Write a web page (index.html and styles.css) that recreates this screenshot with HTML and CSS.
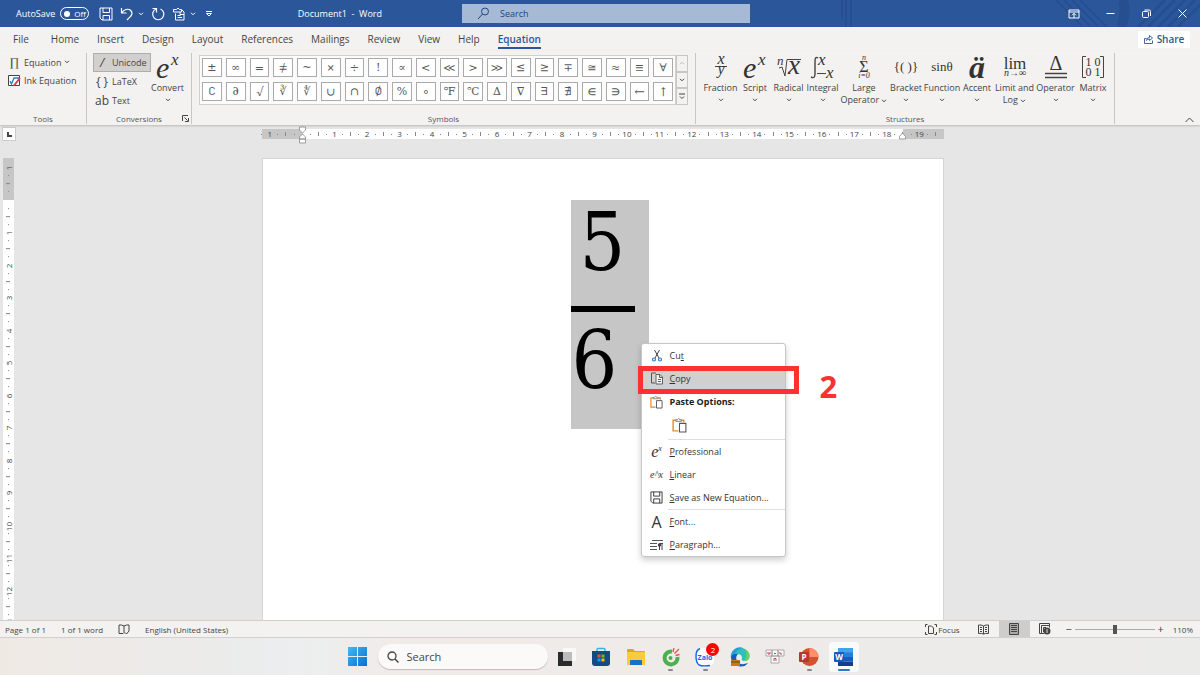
FILE: index.html
```html
<!DOCTYPE html>
<html lang="en">
<head>
    <meta charset="UTF-8">
    <meta name="viewport" content="width=device-width, initial-scale=1.0">
    <title>Document1 - Word</title>
    <link rel="stylesheet" href="styles.css">
</head>
<body>

    <!-- Shared icons -->
    <svg class="sprite" aria-hidden="true">
        <symbol id="chevron" viewBox="0 0 6 4"><path d="M1 .8 3 2.8 5 .8" fill="none" stroke="currentColor"/></symbol>
        <symbol id="floppy" viewBox="0 0 14 14"><path d="M1 1h12v12H3l-2-2zM4 1v4.500h6.500V1M4 13V8.500h6.500V13" fill="none" stroke="currentColor"/></symbol>
        <symbol id="clipboard" viewBox="0 0 14 15">
            <path d="M6 13H1V3h2.500M9.500 3H11v2" fill="none" stroke="#e08c2c" stroke-width="1.300"/>
            <path d="M3.500 4V2.500h1.500Q6 .2 7.500 2.500h1.500V4z" fill="#fff" stroke="#777" stroke-width=".9"/>
            <path d="M7 6h6v8H7z" fill="#fff" stroke="#555"/>
        </symbol>
    </svg>

    <!-- Title bar -->
    <header class="titlebar">
        <svg class="titlebar-art" viewBox="0 0 360 27" aria-hidden="true">
            <g fill="none" stroke="#1f4482" opacity=".4">
                <path d="M2 0v20M6 0v27M11 0v27" stroke-width="2"/>
                <path d="M216 0l27 27M224 0l27 27M232 0l27 27M240 0l27 27" stroke-width="2"/>
                <path d="M283 0q4 14-2 27" stroke-width="10"/>
                <path d="M298 27l27-27M308 27l27-27M318 27l27-27M328 27l27-27M338 27l27-27" stroke-width="3"/>
            </g>
        </svg>
        <div class="quick-access">
            <label class="autosave">AutoSave
                <span class="switch"><input type="checkbox"><span>Off</span></span>
            </label>
            <button class="qa-btn" aria-label="Save"><svg width="14" height="14"><use href="#floppy"/></svg></button>
            <button class="qa-btn" aria-label="Undo"><svg width="14" height="14" viewBox="0 0 14 14"><path d="M1.500 1v5h5M1.800 5.800C4 2.500 8 1.200 10.500 3.300c2.400 2.200 1.600 4.700-.2 6.400L7 13" fill="none" stroke="currentColor" stroke-width="1.200"/></svg></button>
            <button class="qa-drop" aria-label="Undo list"><svg width="6" height="4"><use href="#chevron"/></svg></button>
            <button class="qa-btn" aria-label="Repeat"><svg width="14" height="14" viewBox="0 0 14 14"><path d="M1.500 1.500h4v4M5 2A5.600 5.600 0 1 0 9.500 2" fill="none" stroke="currentColor" stroke-width="1.200"/></svg></button>
            <button class="qa-btn" aria-label="Paste"><svg width="14" height="14" viewBox="0 0 14 14"><path d="M3.500 6.500V13H12V5L10 3M1.500 5V2.500h3L6 1l1.500 1.500h2V5M1.500 5h8M8 5v2.500h4M5.500 8.500h3M5.500 10.500h4.500" fill="none" stroke="currentColor"/></svg></button>
            <button class="qa-drop" aria-label="Paste list"><svg width="6" height="4"><use href="#chevron"/></svg></button>
            <button class="qa-drop qa-custom" aria-label="Customize toolbar"><svg width="8" height="6" viewBox="0 0 8 6"><path d="M1 .5h6M1.500 2.500h5L4 5z" fill="none" stroke="currentColor"/></svg></button>
            <span class="doc-title">Document1&nbsp; -&nbsp; Word</span>
        </div>
        <label class="search-box">
            <svg width="13" height="13" viewBox="0 0 13 13"><circle cx="8" cy="4.500" r="3.500" fill="none" stroke="currentColor"/><path d="M5.500 7 1 12" stroke="currentColor"/></svg>
            <input type="text" placeholder="Search" aria-label="Search">
        </label>
        <div class="window-buttons">
            <button aria-label="Ribbon display"><svg width="12" height="10" viewBox="0 0 12 10"><path d="M1 1h10v8H1zM1 3h10M6 9V4.500M4 6.300l2-2 2 2" fill="none" stroke="currentColor"/></svg></button>
            <button aria-label="Minimize"><svg width="9" height="9" viewBox="0 0 9 9"><path d="M.5 4.500h8" stroke="currentColor"/></svg></button>
            <button aria-label="Restore"><svg width="9" height="9" viewBox="0 0 9 9"><rect x=".5" y="2.500" width="6" height="6" rx="1" fill="none" stroke="currentColor"/><path d="M2.500 1h4.500q1.500 0 1.500 1.500V7" fill="none" stroke="currentColor"/></svg></button>
            <button aria-label="Close"><svg width="9" height="9" viewBox="0 0 9 9"><path d="M.5.5l8 8M8.500.5l-8 8" stroke="currentColor"/></svg></button>
        </div>
    </header>

    <!-- Ribbon tabs -->
    <nav class="tabs">
        <a href="#" class="tab-file">File</a>
        <a href="#">Home</a>
        <a href="#">Insert</a>
        <a href="#">Design</a>
        <a href="#">Layout</a>
        <a href="#">References</a>
        <a href="#">Mailings</a>
        <a href="#">Review</a>
        <a href="#">View</a>
        <a href="#">Help</a>
        <a href="#" class="active">Equation</a>
        <button class="share-btn"><svg width="9" height="10" viewBox="0 0 9 10"><path d="M2.500 4.500H.5v5h8v-3M2.500 6.500q0-3 3-3V1.500l3 2.500-3 2.500V5q-2 0-3 1.500z" fill="none" stroke="currentColor" stroke-width=".9"/></svg>Share</button>
    </nav>

    <!-- Ribbon -->
    <section class="ribbon">
        <div class="group tools">
            <div class="group-body">
                <button class="small-btn"><span class="glyph pi">∏</span>Equation<svg width="6" height="4"><use href="#chevron"/></svg></button>
                <button class="small-btn"><svg class="ink" width="13" height="13" viewBox="0 0 13 13"><path d="M.5 1.500h11v10H.5z" fill="#fff" stroke="#444"/><path d="M2 7l1.500 3L6 4h5" fill="none" stroke="#2b7cc4" stroke-width="1.300"/><path d="M6 11.500 12 4" stroke="#d83b50" stroke-width="2"/></svg>Ink Equation</button>
            </div>
            <h3>Tools</h3>
        </div>

        <div class="group conversions">
            <div class="group-body">
                <div class="formats">
                    <button class="small-btn selected"><span class="glyph slash">/</span>Unicode</button>
                    <button class="small-btn"><span class="glyph">{ }</span>LaTeX</button>
                    <button class="small-btn"><span class="glyph">ab</span>Text</button>
                </div>
                <button class="big-btn">
                    <svg width="30" height="29" viewBox="0 0 30 29"><text class="math" x="3" y="25" font-size="30">e</text><text class="math" x="18" y="12" font-size="17">x</text></svg>
                    <span>Convert</span>
                    <svg width="6" height="4"><use href="#chevron"/></svg>
                </button>
            </div>
            <h3>Conversions</h3>
            <button class="launcher" aria-label="Conversion options"><svg width="7" height="7" viewBox="0 0 7 7"><path d="M.5 6V.5H6M2.500 2.500l3 3M6.500 3v3.500H3" fill="none" stroke="currentColor"/></svg></button>
        </div>

        <div class="group symbols">
            <div class="group-body">
                <div class="symbol-grid" id="symbols"></div>
                <div class="scroller">
                    <button aria-label="Scroll up" disabled><svg class="up" width="6" height="4"><use href="#chevron"/></svg></button>
                    <button aria-label="Scroll down"><svg width="6" height="4"><use href="#chevron"/></svg></button>
                    <button aria-label="More"><svg width="6" height="7" viewBox="0 0 6 7"><path d="M0 1h6M1 3.500l2 2 2-2" fill="none" stroke="currentColor"/></svg></button>
                </div>
            </div>
            <h3>Symbols</h3>
        </div>

        <div class="group structures">
            <div class="group-body">
                <button class="big-btn">
                    <svg width="30" height="29" viewBox="0 0 30 29"><text class="math" x="15" y="11" font-size="16" text-anchor="middle">x</text><path d="M9 13.500h12" stroke="currentColor"/><text class="math" x="15" y="21" font-size="16" text-anchor="middle">y</text></svg>
                    <span>Fraction</span><svg width="6" height="4"><use href="#chevron"/></svg>
                </button>
                <button class="big-btn">
                    <svg width="30" height="29" viewBox="0 0 30 29"><text class="math" x="3" y="25" font-size="30">e</text><text class="math" x="18" y="12" font-size="17">x</text></svg>
                    <span>Script</span><svg width="6" height="4"><use href="#chevron"/></svg>
                </button>
                <button class="big-btn">
                    <svg width="30" height="29" viewBox="0 0 30 29"><text class="math" x="3" y="12" font-size="13">n</text><path d="M5 15l3-1 3 9L13 6.500h14" fill="none" stroke="currentColor"/><text class="math" x="14" y="21" font-size="27">x</text></svg>
                    <span>Radical</span><svg width="6" height="4"><use href="#chevron"/></svg>
                </button>
                <button class="big-btn">
                    <svg width="30" height="29" viewBox="0 0 30 29"><path d="M10 5q-3-2-3 3v13q0 5-4 3" fill="none" stroke="currentColor" stroke-width="1.400"/><text class="math" x="10" y="12" font-size="17">x</text><path d="M9 20.500h9" stroke="currentColor"/><text class="math" x="18" y="25" font-size="17">x</text></svg>
                    <span>Integral</span><svg width="6" height="4"><use href="#chevron"/></svg>
                </button>
                <button class="big-btn">
                    <svg width="30" height="29" viewBox="0 0 30 29"><text class="math" x="15" y="7" font-size="8" text-anchor="middle">n</text><text class="math upright" x="15" y="19" font-size="16" text-anchor="middle">Σ</text><text class="math" x="15" y="25" font-size="8" text-anchor="middle">i=0</text></svg>
                    <span>Large</span><span class="line-two">Operator <svg width="6" height="4"><use href="#chevron"/></svg></span>
                </button>
                <button class="big-btn">
                    <svg width="30" height="29" viewBox="0 0 30 29"><text class="math upright" x="15" y="18" font-size="13" text-anchor="middle">{( )}</text></svg>
                    <span>Bracket</span><svg width="6" height="4"><use href="#chevron"/></svg>
                </button>
                <button class="big-btn">
                    <svg width="30" height="29" viewBox="0 0 30 29"><text class="math upright" x="15" y="18" font-size="13" text-anchor="middle">sinθ</text></svg>
                    <span>Function</span><svg width="6" height="4"><use href="#chevron"/></svg>
                </button>
                <button class="big-btn">
                    <svg width="30" height="29" viewBox="0 0 30 29"><text class="math heavy" x="15" y="25" font-size="32" text-anchor="middle">ä</text></svg>
                    <span>Accent</span><svg width="6" height="4"><use href="#chevron"/></svg>
                </button>
                <button class="big-btn">
                    <svg width="30" height="29" viewBox="0 0 30 29"><text class="math upright" x="15" y="16" font-size="17" text-anchor="middle">lim</text><text class="math" x="15" y="23" font-size="10" text-anchor="middle">n→∞</text></svg>
                    <span>Limit and</span><span class="line-two">Log <svg width="6" height="4"><use href="#chevron"/></svg></span>
                </button>
                <button class="big-btn">
                    <svg width="30" height="29" viewBox="0 0 30 29"><text class="math upright" x="15" y="17" font-size="20" text-anchor="middle">Δ</text><path d="M4 20.500h22M4 24.500h22" stroke="currentColor" stroke-width="1.500"/></svg>
                    <span>Operator</span><svg width="6" height="4"><use href="#chevron"/></svg>
                </button>
                <button class="big-btn">
                    <svg width="30" height="29" viewBox="0 0 30 29"><path d="M8 3.500H4.500v21H8M22 3.500h3.500v21H22" fill="none" stroke="currentColor"/><text class="math upright" x="15" y="13" font-size="12" text-anchor="middle">1 0</text><text class="math upright" x="15" y="23" font-size="12" text-anchor="middle">0 1</text></svg>
                    <span>Matrix</span><svg width="6" height="4"><use href="#chevron"/></svg>
                </button>
            </div>
            <h3>Structures</h3>
        </div>
        <button class="collapse" aria-label="Collapse ribbon"><svg width="9" height="6" viewBox="0 0 9 6"><path d="M.5 5 4.500 1l4 4" fill="none" stroke="currentColor"/></svg></button>
    </section>

    <!-- Document area -->
    <main class="workspace">
        <button class="tab-stop" aria-label="Tab stop"><svg width="5" height="5" viewBox="0 0 5 5"><path d="M1 0v4h4" fill="none" stroke="currentColor" stroke-width="2"/></svg></button>
        <div class="ruler-h">
            <div class="marks" id="ruler-h"></div>
            <svg class="indent indent-left" width="9" height="18" viewBox="0 0 9 18"><path d="M1.500 1h6v3l-3 3-3-3zM4.500 8l3 3v2h-6v-2zM1.500 13h6v4h-6z" fill="#fff" stroke="#888" stroke-width=".8"/></svg>
            <svg class="indent indent-right" width="9" height="18" viewBox="0 0 9 18"><path d="M4.500 7l3 3.500V13h-6v-2.500z" fill="#fff" stroke="#888" stroke-width=".8"/></svg>
        </div>
        <div class="ruler-v">
            <div class="marks" id="ruler-v"></div>
        </div>
        <article class="page">
            <div class="selection">
                <div class="fraction">
                    <span class="numerator">5</span>
                    <span class="denominator">6</span>
                </div>
            </div>

            <!-- Context menu -->
            <div class="context-menu" role="menu">
                <button role="menuitem"><svg width="12" height="13" viewBox="0 0 12 13"><path d="M3.500 1 8 9M8.500 1 4 9" stroke="#444"/><g fill="none" stroke="#2b7cc4" stroke-width="1.200"><circle cx="3" cy="10.500" r="1.500"/><circle cx="9" cy="10.500" r="1.500"/></g></svg><span>Cu<u>t</u></span></button>
                <button role="menuitem" class="hover"><svg width="14" height="13" viewBox="0 0 14 13"><path d="M5 11H1.500V1H6" fill="none" stroke="#555"/><path d="M6 2.500h4l2.500 2.500v7H6zM9.500 2.500V5.500h3M8 7.500h3M8 9.500h3" fill="#f3f3f3" stroke="#555" stroke-width=".9"/></svg><span><u>C</u>opy</span></button>
                <div class="paste-label"><svg width="13" height="14"><use href="#clipboard"/></svg><span>Paste Options:</span></div>
                <div class="paste-row"><button role="menuitem" aria-label="Keep source formatting"><svg width="15" height="16"><use href="#clipboard"/></svg></button></div>
                <hr>
                <button role="menuitem"><span class="icon-text e-pow">e<sup>x</sup></span><span><u>P</u>rofessional</span></button>
                <button role="menuitem"><span class="icon-text linear">e^x</span><span><u>L</u>inear</span></button>
                <button role="menuitem"><svg width="13" height="13"><use href="#floppy"/></svg><span><u>S</u>ave as New Equation...</span></button>
                <hr>
                <button role="menuitem"><span class="icon-text font-a">A</span><span><u>F</u>ont...</span></button>
                <button role="menuitem"><svg width="14" height="12" viewBox="0 0 14 12"><path d="M2 1.500h11M0 4.500h7M0 7.500h7M0 10.500h7" stroke="#555"/><path d="M9.500 11V4.500H13M12 11V4.500" fill="none" stroke="#444"/><circle cx="9.500" cy="6" r="1.700" fill="#444"/></svg><span><u>P</u>aragraph...</span></button>
                <div class="callout"></div>
                <strong class="step">2</strong>
            </div>
        </article>
    </main>

    <!-- Status bar -->
    <footer class="statusbar">
        <span>Page 1 of 1</span>
        <span>1 of 1 word</span>
        <svg width="12" height="11" viewBox="0 0 12 11"><path d="M6 2v7.500M6 2Q3.500.5 1 1v8.500h4M6 2Q8.500.5 11 1v6M7 8.500l1.500 1.500L11 7" fill="none" stroke="currentColor"/></svg>
        <span>English (United States)</span>
        <button class="focus-btn"><svg width="12" height="11" viewBox="0 0 12 11"><path d="M.5 3V.5H2.500M9.500.5h2V3M.5 8v2.500h2M9.500 10.500h2V8M3.500 2h3L8.500 4v5.500h-5z" fill="none" stroke="currentColor"/></svg>Focus</button>
        <button class="view-btn" aria-label="Read mode"><svg width="11" height="11" viewBox="0 0 11 11"><path d="M5.500 2v8M5.500 2Q3 .5.500 1v8.500q3-.5 5 .5 2-1 5-.5V1Q8 .5 5.500 2M2 3.500h2M2 5.500h2M2 7.500h2M7 3.500h2M7 5.500h2M7 7.500h2" fill="none" stroke="currentColor"/></svg></button>
        <button class="view-btn current" aria-label="Print layout"><svg width="10" height="12" viewBox="0 0 10 12"><path d="M.5.5h9v11h-9z" fill="#aaa" stroke="currentColor"/><path d="M2 2.500h6M2 4.500h6M2 6.500h6M2 8.500h6" stroke="currentColor"/></svg></button>
        <button class="view-btn" aria-label="Web layout"><svg width="12" height="12" viewBox="0 0 12 12"><path d="M5 10.500H.5V.5h10v4M2.500 10V2.500H10M4.500 9V4.500H7" fill="none" stroke="currentColor"/><circle cx="8" cy="8" r="3.500" fill="currentColor"/><path d="M8 6v4" stroke="#ddd"/></svg></button>
        <div class="zoom">
            <button aria-label="Zoom out">−</button>
            <input type="range" min="0" max="100" value="50" aria-label="Zoom">
            <button aria-label="Zoom in">+</button>
            <span>110%</span>
        </div>
    </footer>

    <!-- Windows taskbar -->
    <nav class="taskbar">
        <button class="start" aria-label="Start"><svg width="19" height="19" viewBox="0 0 19 19"><defs><linearGradient id="win" x1="0" y1="0" x2="1" y2="1" gradientUnits="objectBoundingBox"><stop offset="0" stop-color="#3fb9f2"/><stop offset="1" stop-color="#0a6fd0"/></linearGradient></defs><path d="M0 0h9v9H0zM10 0h9v9h-9zM0 10h9v9H0zM10 10h9v9h-9z" fill="url(#win)"/></svg></button>
        <label class="task-search">
            <svg width="12" height="12" viewBox="0 0 12 12"><circle cx="5" cy="5" r="4" fill="none" stroke="currentColor" stroke-width="1.300"/><path d="M8 8l3.500 3.500" stroke="currentColor" stroke-width="1.500"/></svg>
            <input type="text" placeholder="Search" aria-label="Search the web and Windows">
        </label>
        <div class="apps">
            <button aria-label="Task view"><svg width="20" height="20" viewBox="0 0 20 20"><path d="M6 1h13v13H6z" fill="#f8f8f7"/><path d="M1 5h14v14H1z" fill="#2b2b2b"/><path d="M6 5h9v9H6z" fill="#bcbcbc"/></svg></button>
            <button aria-label="Store"><svg width="20" height="20" viewBox="0 0 20 20"><path d="M6 5V2.500q0-1 1-1h6q1 0 1 1V5" fill="none" stroke="#37b5e8" stroke-width="1.400"/><path d="M1 4h18v12q0 3-3 3H4q-3 0-3-3z" fill="#164a86"/><path d="M6.500 7.500H9.500v3H6.500z" fill="#f25022"/><path d="M10.500 7.500h3v3h-3z" fill="#7fba00"/><path d="M6.500 11.500h3v3h-3z" fill="#00a4ef"/><path d="M10.500 11.500h3v3h-3z" fill="#ffb900"/></svg></button>
            <button aria-label="File Explorer"><svg width="20" height="20" viewBox="0 0 20 20"><path d="M1 3q0-1 1-1h5l2 2h9q1 0 1 1v9H1z" fill="#e3a51f"/><path d="M1 5h18v13H1z" fill="#fbcb3d"/><path d="M4 18v-4q0-1 1-1h10q1 0 1 1v4z" fill="#1673c4"/></svg></button>
            <button class="running" aria-label="Browser"><svg width="20" height="20" viewBox="0 0 20 20"><path d="M11 4.500A6.500 6.500 0 1 0 16.500 10" fill="none" stroke="#4caf50" stroke-width="4"/><circle cx="9.500" cy="11" r="2" fill="#4caf50"/><path d="M12 5l1-4M13.500 6.500 18 2M14.500 8.500l4-1" stroke="#e2574c" stroke-width="1.300"/></svg></button>
            <button class="running" aria-label="Zalo"><svg width="20" height="20" viewBox="0 0 20 20"><path d="M7 1h7q5 0 5 6v6q0 6-6 6H8L3 19Q1 17 1 12V7q0-6 6-6z" fill="#fff"/><path d="M5 1.500Q1 3 1 9q0 7 3 9 4 1.500 11 .5" fill="none" stroke="#1465e8" stroke-width="1.400"/><text x="10" y="13" class="zalo" text-anchor="middle">Zalo</text></svg><span class="badge">2</span></button>
            <button aria-label="Edge"><svg width="20" height="20" viewBox="0 0 20 20"><path d="M1 11A9.300 9.300 0 0 1 19.500 9Q19.500 14 14 14q-3 0-2-3 0-4-5-4-4 0-6 4z" fill="#31c0b8"/><path d="M1 11A9 9 0 0 1 13 1Q7 2 4 8z" fill="#1fa0dc"/><path d="M15 2q5 3 4.500 7Q19 14 14 14q4-5 1-12z" fill="#6bd05a"/><path d="M1 10q2-4 7-3-3 3-1 7 3 5 11 2-3 4-8 3.500Q1 19 1 10z" fill="#1560b4"/><path d="M1 13h9v6H1z" fill="#c67a1c"/><path d="M1 15h9" stroke="#684315"/></svg></button>
            <button aria-label="Keyboard"><svg width="20" height="20" viewBox="0 0 20 20"><g fill="#fafafa" stroke="#999" stroke-width=".8"><path d="M1 3h6v6H1zM7 3h6v6H7zM13 3h6v6h-6zM6 9h8v7H6z"/></g><path d="M3 5v2h2V5M9 6.500h2M15 5v2h2M9 14v-2.500h2V14" fill="none" stroke="#b94a5c"/></svg></button>
            <button class="running" aria-label="PowerPoint"><svg width="20" height="20" viewBox="0 0 20 20"><circle cx="10.500" cy="10" r="9" fill="#d35230"/><path d="M10.500 1a9 9 0 0 1 9 9h-9z" fill="#ff8f6b"/><rect x="0" y="5" width="10" height="10" rx="1" fill="#b7372a"/><text x="5" y="13" class="app-letter" text-anchor="middle">P</text></svg></button>
            <button class="running open" aria-label="Word"><svg width="20" height="20" viewBox="0 0 20 20"><path d="M4 1h15v5H4z" fill="#41a5ee"/><path d="M4 5.500h15V10H4z" fill="#2b7cd3"/><path d="M4 10h15v4.500H4z" fill="#185abd"/><path d="M4 14.500h15V19H4z" fill="#103f91"/><rect x="0" y="5" width="10" height="10" rx="1" fill="#185abd"/><text x="5" y="13" class="app-letter" text-anchor="middle">W</text></svg></button>
        </div>
    </nav>

    <script>
        // Symbol gallery
        const symbols = "± ∞ = ≠ ~ × ÷ ! ∝ < ≪ > ≫ ≤ ≥ ∓ ≅ ≈ ≡ ∀ ∁ ∂ √ ∛ ∜ ∪ ∩ ∅ % ∘ ℉ ℃ ∆ ∇ ∃ ∄ ∈ ∋ ← ↑".split(" ");
        const gallery = document.getElementById("symbols");
        symbols.forEach(s => {
            const button = document.createElement("button");
            button.textContent = s;
            gallery.appendChild(button);
        });

        // Ruler marks: four steps to a centimetre, "zero" is the step of the margin
        function drawRuler(id, steps, zero) {
            const ruler = document.getElementById(id);
            for (let i = 0; i < steps; i++) {
                const mark = document.createElement("span");
                const step = Math.abs(i - zero);
                if (step % 4 === 0) {
                    mark.textContent = step ? step / 4 : "";
                } else {
                    mark.className = step % 4 === 2 ? "tick" : "dot";
                }
                ruler.appendChild(mark);
            }
        }
        drawRuler("ruler-h", 84, 5);
        drawRuler("ruler-v", 80, 4);
    </script>

</body>
</html>
```
FILE: styles.css
```css
* {
    margin: 0;
    padding: 0;
    box-sizing: border-box;
}

body {
    display: flex;
    flex-direction: column;
    height: 100vh;
    overflow: hidden;
    font-family: "Open Sans", "Noto Sans", sans-serif;
    font-size: 9px;
    color: #444;
    background-color: #e6e6e6;
}

button {
    display: flex;
    align-items: center;
    justify-content: center;
    border: none;
    background: none;
    font: inherit;
    color: inherit;
    white-space: nowrap;
}

svg {
    flex: none;
    overflow: visible;
}

input {
    font: inherit;
    color: inherit;
}

a {
    color: inherit;
    text-decoration: none;
}

.sprite {
    position: absolute;
    width: 0;
    height: 0;
}

/* Title bar */
.titlebar {
    position: relative;
    flex: none;
    display: grid;
    grid-template-columns: 77fr 48fr 75fr;
    align-items: center;
    height: 27px;
    background-color: #2b579a;
    color: white;
}

.titlebar-art {
    position: absolute;
    top: 0;
    right: 0;
    width: 360px;
    height: 27px;
    overflow: hidden;
}

.quick-access {
    display: flex;
    align-items: center;
    padding-left: 16px;
}

.autosave {
    display: flex;
    align-items: center;
    gap: 5px;
    margin-right: 10px;
}

.switch {
    display: flex;
    align-items: center;
    gap: 4px;
    width: 29px;
    height: 13px;
    padding-left: 3px;
    border: 1px solid white;
    border-radius: 7px;
    font-size: 8px;
}

.switch input {
    appearance: none;
    width: 6px;
    height: 6px;
    border-radius: 50%;
    background-color: white;
}

.qa-btn {
    width: 14px;
    margin-right: 7px;
}

.qa-drop {
    width: 6px;
    margin-right: 7px;
    margin-left: -3px;
}

.qa-custom {
    width: 8px;
    margin-left: 2px;
}

.doc-title {
    margin-left: auto;
    margin-right: 80px;
    white-space: nowrap;
}

.search-box {
    display: flex;
    align-items: center;
    gap: 10px;
    height: 19px;
    padding-left: 15px;
    background-color: #a6bad6;
    color: #1f4482;
}

.search-box input,
.task-search input {
    flex: 1;
    min-width: 0;
    border: none;
    outline: none;
    background: none;
}

input::placeholder {
    color: inherit;
    opacity: 1;
}

.window-buttons {
    position: relative;
    display: flex;
    justify-content: flex-end;
}

.window-buttons button {
    width: 36px;
    height: 27px;
}

/* Tabs */
.tabs {
    flex: none;
    display: flex;
    align-items: center;
    gap: 18px;
    height: 24px;
    padding: 0 10px 0 13px;
    background-color: #f3f2f1;
    font-size: 10px;
}

.tabs a {
    height: 20px;
    line-height: 20px;
}

.tabs .tab-file {
    margin-right: 4px;
}

.tabs .active {
    border-bottom: 2px solid #2b579a;
    color: #2b579a;
    font-weight: 600;
}

.share-btn {
    gap: 4px;
    width: 52px;
    height: 17px;
    margin-left: auto;
    background-color: white;
    color: #2b579a;
    font-weight: 600;
}

/* Ribbon */
.ribbon {
    position: relative;
    z-index: 1;
    flex: none;
    display: flex;
    height: 74px;
    padding: 2px 0 1px;
    background-color: #f3f2f1;
    box-shadow: 0 1px 2px rgba(0, 0, 0, 0.2);
}

.group {
    position: relative;
    display: flex;
    flex-direction: column;
    justify-content: space-between;
    border-right: 1px solid #c8c6c4;
}

.group h3 {
    font-size: 8px;
    line-height: 10px;
    font-weight: normal;
    text-align: center;
    color: #555;
}

.tools {
    width: 87px;
}

.tools .group-body {
    display: flex;
    flex-direction: column;
    padding-left: 8px;
}

.conversions {
    width: 105px;
}

.conversions .group-body {
    display: flex;
    padding-left: 6px;
}

.small-btn {
    justify-content: flex-start;
    gap: 3px;
    height: 18px;
}

.small-btn .glyph {
    width: 14px;
    font-size: 12px;
    line-height: 16px;
    text-align: center;
}

.small-btn .pi {
    width: 13px;
    font-family: "Liberation Serif", serif;
}

.formats .small-btn {
    width: 58px;
    height: 19px;
    padding-left: 1px;
    border: 1px solid transparent;
}

.formats .selected {
    border-color: #b0aeac;
    background-color: #d2d0ce;
}

.formats .slash {
    font-style: italic;
}

.big-btn {
    flex-direction: column;
    justify-content: flex-start;
    line-height: 12px;
}

.big-btn > svg:last-child {
    margin-top: 4px;
}

.math {
    font-family: "Liberation Serif", serif;
    font-style: italic;
    fill: #333;
}

.upright {
    font-style: normal;
}

.heavy {
    font-weight: bold;
}

.launcher {
    position: absolute;
    right: 2px;
    bottom: 2px;
}

.symbols {
    width: 504px;
}

.symbols .group-body {
    display: flex;
    height: 50px;
    margin: 2px 7px 0;
}

.symbol-grid {
    flex: 1;
    display: grid;
    grid-template-columns: repeat(20, 1fr);
    grid-template-rows: 19px 19px;
    gap: 5px 4px;
    padding: 2px;
    border: 1px solid #d2d0ce;
    background-color: #fbfbfb;
}

.symbol-grid button {
    border: 1px solid #aaa;
    background-color: white;
    font-family: "DejaVu Math TeX Gyre", "Liberation Serif", "DejaVu Serif", serif;
    font-size: 11px;
    line-height: 11px;
    color: #555;
}

.scroller {
    display: grid;
    grid-template-rows: repeat(3, 1fr);
    width: 12px;
}

.scroller button {
    border: 1px solid #c8c6c4;
}

.scroller button:disabled {
    color: #bbb;
}

.up {
    transform: rotate(180deg);
}

.structures {
    width: 419px;
}

.structures .group-body {
    display: grid;
    grid-template-columns: 35px 34px 33px 35px 48px 36px 36px 34px 41px 41px 34px;
    padding-left: 7px;
}

.line-two svg {
    vertical-align: middle;
}

.collapse {
    position: absolute;
    right: 6px;
    bottom: 2px;
}

/* Document area */
.workspace {
    flex: 1;
    min-height: 0;
    display: grid;
    grid-template-columns: 17px 1fr;
    grid-template-rows: 19px 1fr;
    row-gap: 14px;
    padding-right: 12px;
    overflow: hidden;
}

.tab-stop {
    width: 14px;
    height: 14px;
    margin: 2px 0 0 2px;
    border: 1px solid #ccc;
    background-color: white;
}

.ruler-h {
    position: relative;
    justify-self: center;
    width: 682px;
    height: 10px;
    margin-top: 4px;
    background: linear-gradient(to right, #c6c6c6 6%, white 6% 94%, #c6c6c6 94%);
}

.ruler-h .marks {
    display: grid;
    grid-template-columns: repeat(84, 1fr);
    width: 682px;
    margin-left: -4px;
}

.marks span {
    display: flex;
    align-items: center;
    justify-content: center;
    min-width: 0;
    font-size: 8px;
    line-height: 10px;
}

.marks .tick::before,
.marks .dot::before {
    content: "";
    width: 1px;
    height: 4px;
    background-color: #888;
}

.marks .dot::before {
    height: 1px;
}

.indent {
    position: absolute;
    top: -3px;
}

.indent-left {
    left: 36px;
}

.indent-right {
    right: 37px;
}

.ruler-v {
    width: 11px;
    margin-left: 3px;
    padding-top: 6px;
    overflow: hidden;
    background: linear-gradient(to bottom, #c6c6c6 42px, white 42px);
}

.ruler-v .marks {
    display: grid;
    grid-template-rows: repeat(80, 1fr);
    height: 650px;
}

.ruler-v span {
    writing-mode: vertical-rl;
    transform: rotate(180deg);
    min-height: 0;
}

.ruler-v .tick::before {
    width: 4px;
    height: 1px;
}

.page {
    position: relative;
    justify-self: center;
    width: 682px;
    padding-top: 41px;
    border: 1px solid #d4d4d4;
    border-bottom: none;
    background-color: white;
}

.selection {
    width: 78px;
    height: 229px;
    margin-left: 308px;
    background-color: #c6c6c6;
}

.fraction {
    width: 64px;
    font-family: "DejaVu Serif Condensed", "DejaVu Serif", serif;
    font-stretch: condensed;
    font-size: 80px;
    color: black;
}

.fraction span {
    display: block;
    text-align: center;
}

.fraction .numerator {
    height: 106px;
    line-height: 86px;
}

.fraction .denominator {
    padding-right: 16px;
    border-top: 6px solid black;
    line-height: 98px;
}

/* Context menu */
.context-menu {
    position: absolute;
    top: 184px;
    left: 378px;
    width: 145px;
    border: 1px solid #c6c6c6;
    border-radius: 3px;
    background-color: white;
    box-shadow: 0 3px 6px rgba(0, 0, 0, 0.2);
    color: #333;
}

.context-menu > button,
.paste-label {
    display: grid;
    grid-template-columns: 14px 1fr;
    align-items: center;
    justify-items: center;
    gap: 6px;
    width: 100%;
    height: 23px;
    padding-left: 8px;
}

.context-menu > button > span:last-child,
.paste-label > span {
    justify-self: start;
}

.context-menu .hover {
    background-color: #d0d0d0;
}

.paste-label {
    font-weight: bold;
    color: #222;
}

.paste-row {
    height: 26px;
    padding: 4px 0 0 30px;
}

.context-menu hr {
    height: 1px;
    margin-left: 26px;
    border: none;
    background-color: #ddd;
}

.icon-text {
    font-family: "Liberation Serif", serif;
    font-style: italic;
}

.e-pow {
    font-size: 16px;
    line-height: 16px;
}

.e-pow sup {
    font-size: 8px;
    line-height: 8px;
}

.linear {
    font-size: 10px;
}

.font-a {
    font-family: "Open Sans", sans-serif;
    font-style: normal;
    font-size: 16px;
    line-height: 16px;
}

.callout {
    position: absolute;
    top: 22px;
    left: -4px;
    width: 161px;
    height: 28px;
    border: 5px solid #fd3131;
}

.step {
    position: absolute;
    top: 25px;
    left: 178px;
    font-size: 31px;
    line-height: 34px;
    color: #fd3131;
}

/* Status bar */
.statusbar {
    position: relative;
    flex: none;
    display: flex;
    align-items: center;
    height: 18px;
    padding: 0 7px 0 5px;
    border-top: 1px solid #d0d0d0;
    border-bottom: 1px solid #d0d0d0;
    background-color: #f3f2f1;
    font-size: 8px;
}

.statusbar > span,
.statusbar > svg {
    margin-right: 15px;
}

.focus-btn {
    gap: 1px;
    margin-left: auto;
    margin-right: 8px;
}

.view-btn {
    width: 31px;
    height: 16px;
}

.view-btn.current {
    background-color: #cfcdcb;
}

.zoom {
    display: flex;
    align-items: center;
    margin-left: 2px;
}

.zoom button {
    width: 12px;
    font-size: 11px;
    line-height: 12px;
}

.zoom input {
    appearance: none;
    width: 80px;
    height: 10px;
    background: linear-gradient(#aaa, #aaa) center / 100% 1px no-repeat;
}

.zoom input::-webkit-slider-thumb {
    appearance: none;
    width: 4px;
    height: 9px;
    background-color: #555;
}

.zoom span {
    margin-left: 6px;
}

/* Taskbar */
.taskbar {
    flex: none;
    display: flex;
    align-items: center;
    justify-content: center;
    height: 37px;
    padding-left: 9px;
    background: linear-gradient(to right, #efe9e4, #ebebea 18%, #ebeeef 24%, #f0ebe8 34%, #ebebea);
}

.task-search {
    display: flex;
    align-items: center;
    gap: 8px;
    width: 170px;
    height: 25px;
    margin-right: 2px;
    margin-left: 11px;
    padding-left: 9px;
    border-radius: 13px;
    background-color: #fbfaf9;
    box-shadow: 0 1px 1px rgba(0, 0, 0, 0.2);
    font-size: 11px;
}

.apps {
    display: grid;
    grid-template-columns: repeat(9, 1fr);
    justify-items: center;
    width: 312px;
}

.apps button {
    position: relative;
    width: 30px;
    height: 30px;
    border-radius: 4px;
}

.apps .running::after {
    content: "";
    position: absolute;
    bottom: 1px;
    width: 5px;
    height: 2px;
    border-radius: 1px;
    background-color: #888;
}

.apps .open {
    background-color: #fafafa;
}

.apps .open::after {
    width: 12px;
    background-color: #2b7cc4;
}

.badge {
    position: absolute;
    top: 1px;
    right: 1px;
    width: 13px;
    height: 13px;
    border-radius: 50%;
    background-color: #f00;
    color: white;
    font-size: 8px;
    line-height: 13px;
    text-align: center;
}

.zalo {
    font-size: 7px;
    font-weight: bold;
    fill: #1465e8;
}

.app-letter {
    font-size: 8px;
    font-weight: bold;
    fill: white;
}
```
